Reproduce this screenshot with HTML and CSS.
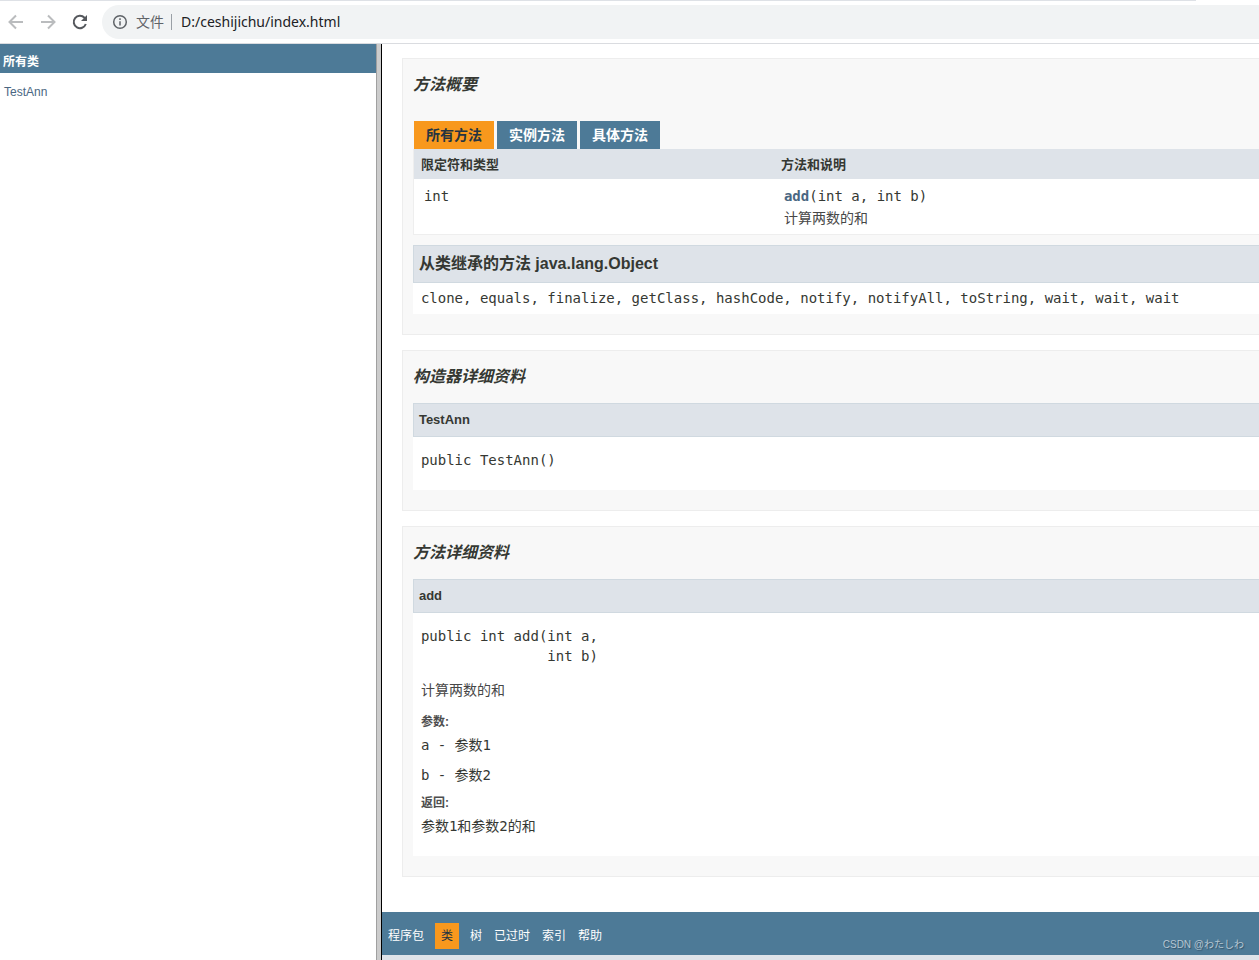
FILE: index.html
```html
<!DOCTYPE html>
<html lang="zh-CN">
<head>
<meta charset="utf-8">
<title>TestAnn</title>
<link rel="stylesheet" href="styles.css">
</head>
<body>
<header class="toolbar">
  <div class="tab-edge"></div>
  <button class="tool" type="button" aria-label="后退">
    <svg class="icon faded" viewBox="0 0 16 16"><path d="M15 8H2M8 1.5 1.5 8 8 14.500"/></svg>
  </button>
  <button class="tool" type="button" aria-label="前进">
    <svg class="icon faded" viewBox="0 0 16 16"><path d="M1 8h13M8 1.500 14.500 8 8 14.500"/></svg>
  </button>
  <button class="tool" type="button" aria-label="重新加载">
    <svg class="icon" viewBox="0 0 16 16"><path d="M13.800 10A6.200 6.200 0 1 1 12.500 3.700L14 5.200"/><path class="solid" d="M15 1v6H9z"/></svg>
  </button>
  <div class="address">
    <svg class="info" viewBox="0 0 16 16"><circle cx="8" cy="8" r="6.300"/><path d="M8 7.200v4.200M8 4.300v1.600"/></svg>
    <span class="scheme">文件</span>
    <input class="url" type="text" aria-label="地址" value="D:/ceshijichu/index.html">
  </div>
</header>
<div class="frames">
  <aside class="classes">
    <h1 class="classes-title">所有类</h1>
    <a class="class-link" href="#">TestAnn</a>
  </aside>
  <div class="splitter"></div>
  <main class="doc">
    <div class="details">
      <section class="block">
        <h2 class="block-title">方法概要</h2>
        <div class="tabs">
          <button class="tab active" type="button">所有方法</button>
          <button class="tab" type="button">实例方法</button>
          <button class="tab" type="button">具体方法</button>
        </div>
        <table class="summary">
          <thead>
            <tr><th class="type-col">限定符和类型</th><th>方法和说明</th></tr>
          </thead>
          <tbody>
            <tr>
              <td><code>int</code></td>
              <td><code><a class="member" href="#add">add</a>(int a, int b)</code><div class="note">计算两数的和</div></td>
            </tr>
          </tbody>
        </table>
        <h3 class="bar bar-large">从类继承的方法 java.lang.Object</h3>
        <div class="body inherited"><code>clone, equals, finalize, getClass, hashCode, notify, notifyAll, toString, wait, wait, wait</code></div>
      </section>
      <section class="block">
        <h2 class="block-title">构造器详细资料</h2>
        <h4 class="bar">TestAnn</h4>
        <div class="body detail"><pre class="signature">public TestAnn()</pre></div>
      </section>
      <section class="block">
        <h2 class="block-title">方法详细资料</h2>
        <h4 class="bar" id="add">add</h4>
        <div class="body detail">
          <pre class="signature">public int add(int a,
               int b)</pre>
          <p class="description">计算两数的和</p>
          <dl class="tags">
            <dt>参数:</dt>
            <dd>a - 参数1</dd>
            <dd>b - 参数2</dd>
            <dt>返回:</dt>
            <dd>参数1和参数2的和</dd>
          </dl>
        </div>
      </section>
    </div>
    <nav class="bottom-nav">
      <a href="#">程序包</a>
      <span class="current">类</span>
      <a href="#">树</a>
      <a href="#">已过时</a>
      <a href="#">索引</a>
      <a href="#">帮助</a>
      <span class="credit">CSDN @わたしわ</span>
    </nav>
    <div class="sub-nav"></div>
  </main>
</div>
</body>
</html>
```
FILE: styles.css
```css
* { box-sizing: border-box; }
body {
  margin: 0;
  height: 100vh;
  display: flex;
  flex-direction: column;
  overflow: hidden;
  background: #fff;
  color: #353833;
  font-family: "Liberation Sans", "Noto Sans CJK SC", sans-serif;
  font-size: 14px;
}
h1, h2, h3, h4, p, pre, dl, dd { margin: 0; }
a { text-decoration: none; color: inherit; }
button { border: 0; font: inherit; }
code, pre { font-family: "DejaVu Sans Mono", "Noto Sans CJK SC", monospace; font-size: 14px; }

.toolbar {
  position: relative;
  flex: none;
  display: flex;
  align-items: center;
  height: 44px;
  padding-left: 8px;
  gap: 16px;
  border-bottom: 1px solid #dadce0;
}
.tab-edge {
  position: absolute;
  top: 0;
  left: 0;
  width: 95%;
  height: 1px;
  background: #dee1e6;
}
.tool { width: 16px; height: 16px; padding: 0; background: none; }
.icon, .info { display: block; width: 16px; height: 16px; fill: none; stroke: #55585d; stroke-width: 2; }
.faded { stroke: #babcbe; }
.solid { fill: #55585d; stroke: none; }
.info { stroke: #5f6368; stroke-width: 1.5; }
.address {
  flex: 1;
  display: flex;
  align-items: center;
  height: 34px;
  margin-left: -2px;
  padding-left: 10px;
  gap: 8px;
  border-radius: 17px 0 0 17px;
  background: #f1f3f4;
}
.scheme {
  padding-right: 7px;
  border-right: 1px solid #9aa0a6;
  color: #5f6368;
  line-height: 16px;
}
.url {
  flex: 1;
  padding: 0 1px;
  border: 0;
  outline: 0;
  background: none;
  color: #202124;
  font-family: "Noto Sans", sans-serif;
  font-size: 14px;
}

.frames { flex: 1; display: flex; min-height: 0; }
.classes { flex: 3 0 0; }
.classes-title {
  height: 29px;
  padding: 9px 3px 0;
  background: #4d7a97;
  color: #fff;
  font-size: 12px;
  line-height: 18px;
}
.class-link { display: block; padding: 10px 4px; color: #4a6782; font-size: 12px; line-height: 18px; }
.splitter {
  flex: none;
  width: 6px;
  border-left: 1px solid #a0a0a0;
  border-right: 1px solid #000;
  background: #ccc;
}
.doc { flex: 7 0 0; min-width: 0; overflow: hidden; }
.details { padding: 14px 0 35px 20px; }
.block {
  margin-bottom: 15px;
  padding: 10px 0 20px 10px;
  border: 1px solid #ededed;
  border-right: 0;
  background: #f8f8f8;
}
.block:last-child { margin-bottom: 0; }
.block-title { margin-bottom: 10px; font-size: 16px; font-style: italic; line-height: 32px; }

.tabs { display: flex; gap: 3px; padding-left: 1px; }
.block-title + .tabs { margin-top: 20px; }
.tab {
  height: 28px;
  padding: 0 12px;
  background: #4d7a97;
  color: #fff;
  font-size: 14px;
  font-weight: bold;
  line-height: 28px;
}
.tab.active { background: #f8981d; color: #253441; }
.summary {
  width: 100%;
  margin-bottom: 10px;
  border-collapse: separate;
  border-spacing: 0;
  border-left: 1px solid #eee;
  border-bottom: 1px solid #eee;
  background: #fff;
}
.summary th {
  height: 30px;
  padding: 2px 7px 0;
  background: #dee3e9;
  font-size: 13px;
  line-height: 28px;
  text-align: left;
}
.type-col { width: 360px; }
.summary td { padding: 6px 10px 5px; line-height: 22px; vertical-align: top; }
.summary code { display: block; }
.member { color: #4a6782; font-weight: bold; }
.note, .description { color: #474747; }

.bar {
  padding: 0 5px;
  border: 1px solid #d0d9e0;
  border-right: 0;
  background: #dee3e9;
  font-size: 13px;
  line-height: 32px;
}
.bar-large { font-size: 16px; line-height: 36px; }
.body { padding-left: 8px; background: #fff; }
.inherited { padding-top: 5px; padding-bottom: 6px; line-height: 20px; }
.detail { padding-top: 13px; padding-bottom: 20px; }
.signature { line-height: 20px; }
.description { margin-top: 14px; line-height: 20px; }
.tags { padding-top: 11px; }
.tags dt { margin-bottom: 2px; color: #4e4e4e; font-size: 12px; font-weight: bold; line-height: 22px; }
.tags dd {
  margin-bottom: 10px;
  font-family: "DejaVu Sans Mono", "Noto Sans CJK SC", monospace;
  line-height: 20px;
}
.tags dd + dt { margin-top: -3px; }
.tags dd:last-child { margin-bottom: 0; }

.bottom-nav {
  display: flex;
  align-items: center;
  height: 43px;
  padding: 4px 15px 0 6px;
  gap: 12px;
  background: #4d7a97;
  color: #fff;
  font-size: 12px;
  line-height: 26px;
}
.current { margin: 0 -1px; padding: 0 6px; background: #f8981d; color: #253441; }
.credit {
  margin-left: auto;
  padding-top: 18px;
  color: #b5c6d2;
  font-family: "Liberation Sans", "Noto Sans CJK JP", sans-serif;
  font-size: 10px;
  text-shadow: 1px 1px 1px #34536a;
}
.sub-nav { height: 40px; background: #dee3e9; }
```
